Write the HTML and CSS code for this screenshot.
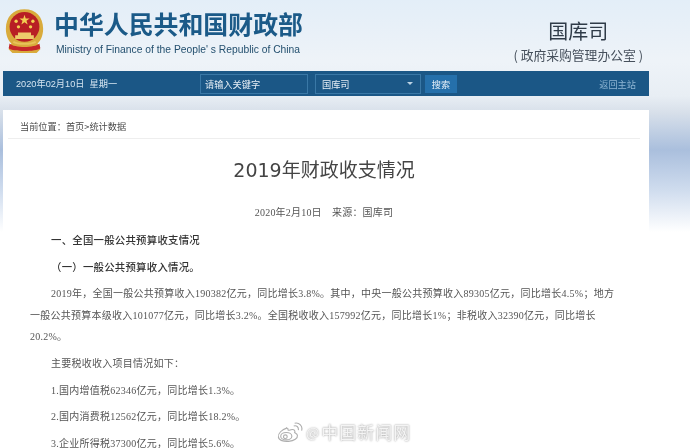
FILE: index.html
```html
<!DOCTYPE html>
<html lang="zh">
<head>
<meta charset="utf-8">
<title>2019年财政收支情况</title>
<link rel="stylesheet" href="styles.css">
</head>
<body>
<div class="page">
  <header class="head">
    <div class="brand">
      <svg class="emblem" viewBox="0 0 44 50" width="41" height="47">
        <path d="M22 1C10 1 2 9 2 22c0 8 3 13 6 16l-3 6 4 4h26l4-4-3-6c3-3 6-8 6-16C42 9 34 1 22 1z" fill="#d9ab3c"/>
        <circle cx="22" cy="20" r="16" fill="#b81f24"/>
        <path d="M22 7l1.300 4h4.200l-3.400 2.500 1.300 4-3.400-2.500-3.400 2.500 1.300-4-3.400-2.500h4.200z" fill="#f2cf52"/>
        <circle cx="13" cy="14" r="1.800" fill="#f2cf52"/><circle cx="31" cy="14" r="1.800" fill="#f2cf52"/>
        <circle cx="15.500" cy="20" r="1.800" fill="#f2cf52"/><circle cx="28.500" cy="20" r="1.800" fill="#f2cf52"/>
        <path d="M12 33v-4h3v-3h14v3h3v4z" fill="#edcb6b"/>
        <path d="M6 38c5 5 27 5 32 0l1 5c-5 4-29 4-34 0z" fill="#c5262a"/>
        <path d="M10 36c4 3 20 3 24 0" fill="none" stroke="#e8c25a" stroke-width="2"/>
      </svg>
      <div class="brand-text">
        <div class="brand-cn">中华人民共和国财政部</div>
        <div class="brand-en">Ministry of Finance of the People' s Republic of China</div>
      </div>
    </div>
    <div class="dept">
      <div class="dept-name">国库司</div>
      <div class="dept-sub">( 政府采购管理办公室 )</div>
    </div>
  </header>

  <nav class="bar">
    <span class="bar-date">2020年02月10日&nbsp;&nbsp;星期一</span>
    <span class="field field-input">请输入关键字</span>
    <span class="field field-select">国库司<i class="caret"></i></span>
    <span class="btn">搜索</span>
    <span class="back">返回主站</span>
  </nav>

  <main class="card">
    <div class="crumb">当前位置：首页&gt;统计数据</div>
    <h1 class="title">2019年财政收支情况</h1>
    <div class="meta">2020年2月10日&emsp;来源：国库司</div>
    <div class="article">
      <p class="lead strong">一、全国一般公共预算收支情况</p>
      <p class="lead strong">（一）一般公共预算收入情况。</p>
      <p class="lead">2019年，全国一般公共预算收入190382亿元，同比增长3.8%。其中，中央一般公共预算收入89305亿元，同比增长4.5%；地方一般公共预算本级收入101077亿元，同比增长3.2%。全国税收收入157992亿元，同比增长1%；非税收入32390亿元，同比增长20.2%。</p>
      <p class="lead">主要税收收入项目情况如下：</p>
      <p class="lead">1.国内增值税62346亿元，同比增长1.3%。</p>
      <p class="lead">2.国内消费税12562亿元，同比增长18.2%。</p>
      <p class="lead">3.企业所得税37300亿元，同比增长5.6%。</p>
    </div>
  </main>

  <div class="mark">
    <svg class="mark-icon" viewBox="0 0 28 22" width="26" height="21">
      <g fill="none" stroke="#aeaeae" stroke-width="1.200">
        <path d="M11 6C5 8 1 12 1.500 16c.5 3.500 6 5 11 4.500 6-.5 10-3.500 9.500-6.500-.3-2-2.500-2.500-3-3 1-2-.5-4-4-3-1.500.5-2.500 1-3 .5-.5-1 .5-2.500-2-2z"/>
        <ellipse cx="10" cy="15" rx="6" ry="4"/>
        <circle cx="9" cy="15.500" r="2"/>
        <path d="M18 4c3-1 5.500 1 5 4.500M19 1c5-1 9 3 7.500 8"/>
      </g>
    </svg>
    <span class="mark-at">@</span><span class="mark-text">中国新闻网</span>
  </div>
</div>
</body>
</html>
```

FILE: styles.css
```css
* { box-sizing: border-box; }
html, body { margin: 0; padding: 0; height: 100%; overflow: hidden; background: #fff; }
body { font-family: "Liberation Serif", "Noto Sans CJK SC", serif; }
.page {
  position: relative;
  width: 690px;
  height: 448px;
  overflow: hidden;
  filter: blur(0.3px);
  background: linear-gradient(180deg, #e3eef8 0, #eaf1f8 40px, #eef3f8 62px, #e8eef4 96px, #d8e0ea 112px, #aabfdd 150px, #cfdcee 190px, #ffffff 232px);
}
.head {
  display: flex;
  justify-content: space-between;
  height: 71px;
  padding: 4px 47px 0 4px;
}
.brand { display: flex; align-items: flex-start; gap: 9px; }
.emblem { margin-top: 4px; flex: none; }
.brand-cn {
  font: 700 24.9px/32px "Noto Sans CJK SC", sans-serif;
  color: #1b5a88;
  white-space: nowrap;
  margin-top: 3px;
}
.brand-en {
  font: 10.3px/15px "Liberation Sans", sans-serif;
  color: #24506f;
  margin: 3px 0 0 2px;
  white-space: nowrap;
}
.dept { display: flex; flex-direction: column; align-items: center; color: #2f3b48; }
.dept-name { font: 20px/28px "Noto Sans CJK SC", sans-serif; margin-top: 13px; }
.dept-sub { font: 12.8px/20px "Noto Sans CJK SC", sans-serif; color: #46505c; white-space: nowrap; }

.bar {
  display: flex;
  align-items: center;
  width: 646px;
  height: 25px;
  margin-left: 3px;
  padding-left: 13px;
  background: #1b5786;
  color: #d5e4f0;
  font: 9.2px/14px "Noto Sans CJK SC", sans-serif;
  white-space: nowrap;
}
.bar-date { width: 184px; font-family: "Liberation Sans", "Noto Sans CJK SC", sans-serif; }
.field {
  display: flex;
  align-items: center;
  height: 20px;
  border: 1px solid #3a78a6;
  padding-left: 4px;
  color: #e6eef5;
}
.field-input { width: 108px; }
.field-select { width: 106px; margin-left: 7px; justify-content: space-between; padding-left: 6px; padding-right: 7px; }
.caret { width: 0; height: 0; border: 3px solid transparent; border-top: 3px solid #bcd3e4; border-bottom: 0; }
.btn {
  width: 32px;
  height: 18px;
  margin-left: 4px;
  background: #2570ab;
  color: #e6f0f8;
  text-align: center;
  line-height: 18px;
}
.back { margin-left: auto; margin-right: 13px; color: #8db4d2; }

.card {
  width: 646px;
  height: 338px;
  margin: 14px 0 0 3px;
  padding: 0 9px 0 5px;
  background: #fff;
  color: #555;
  font: 10.7px/22px "Noto Sans CJK SC", sans-serif;
}
.crumb {
  height: 29px;
  padding: 5px 0 0 12px;
  border-bottom: 1px solid #eee;
  color: #4a4a4a;
  font-size: 9.2px;
}
.title {
  margin: 17px 0 0;
  font: 400 19px/28px "DejaVu Sans", "Noto Sans CJK SC", sans-serif;
  color: #444;
  text-align: center;
}
.meta {
  margin-top: 18px;
  text-align: center;
  font-family: "Liberation Serif", "Noto Sans CJK SC", serif;
  font-size: 10px;
  letter-spacing: 0.2px;
  color: #555;
}
.article {
  margin-top: 6px;
  padding: 0 22px 0 22px;
  font-family: "Liberation Serif", "Noto Sans CJK SC", serif;
  font-size: 10px;
  line-height: 21.5px;
  letter-spacing: 0.25px;
}
.article p { margin: 0 0 5.2px; }
.lead { text-indent: 21px; }
.strong { font-size: 10.4px; font-weight: 500; color: #333; }

.mark {
  position: absolute;
  left: 277px;
  top: 421px;
  display: flex;
  align-items: center;
  color: #f4f4f4;
  font: 17px/22px "Noto Sans CJK SC", sans-serif;
  text-shadow: 0 0 2px #888;
}
.mark-icon { flex: none; }
.mark-at { margin-left: 3px; font-size: 14px; }
.mark-text { margin-left: 2px; letter-spacing: 1px; }
```
